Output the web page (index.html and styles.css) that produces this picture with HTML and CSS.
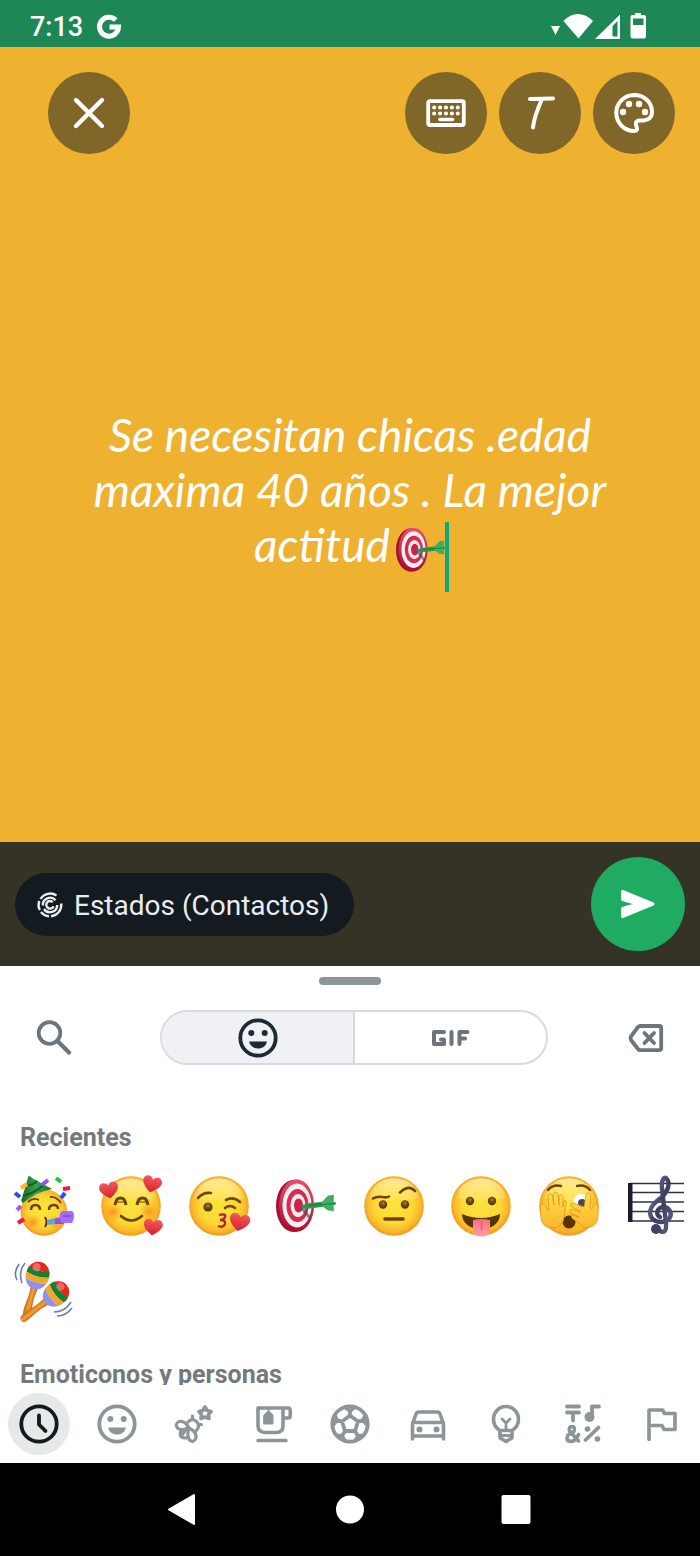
FILE: index.html
```html
<!DOCTYPE html>
<html lang="es">
<head>
<meta charset="utf-8">
<meta name="viewport" content="width=device-width, initial-scale=1">
<title>Estado</title>
<link rel="stylesheet" href="styles.css">
</head>
<body>
<svg class="defs" aria-hidden="true">
  <defs>
    <radialGradient id="face" cx="50%" cy="48%" r="53%">
      <stop offset="0" stop-color="#fbe33c"/><stop offset=".6" stop-color="#fcd935"/><stop offset=".85" stop-color="#fbb829"/><stop offset="1" stop-color="#f08f1b"/>
    </radialGradient>
    <linearGradient id="shine" x1="0" y1="0" x2="0" y2="1">
      <stop offset="0" stop-color="#fff6c4" stop-opacity=".75"/><stop offset="1" stop-color="#fff08a" stop-opacity=".3"/>
    </linearGradient>
    <radialGradient id="blush"><stop offset="0" stop-color="#f9801d" stop-opacity=".8"/><stop offset="1" stop-color="#f9a01d" stop-opacity="0"/></radialGradient>
    <radialGradient id="pupil" cx="50%" cy="35%" r="60%"><stop offset="0" stop-color="#a9814a"/><stop offset=".5" stop-color="#70480f"/><stop offset="1" stop-color="#5a3505"/></radialGradient>
    <linearGradient id="red" x1="0" y1="0" x2="0" y2="1"><stop offset="0" stop-color="#f4595c"/><stop offset="1" stop-color="#d5202d"/></linearGradient>
    <linearGradient id="hand" x1="0" y1="0" x2="0" y2="1"><stop offset="0" stop-color="#ffe04b"/><stop offset="1" stop-color="#fbb62c"/></linearGradient>
    <linearGradient id="tongue" x1="0" y1="0" x2="0" y2="1"><stop offset="0" stop-color="#f4707c"/><stop offset="1" stop-color="#ff9da3"/></linearGradient>
    <linearGradient id="hat" x1="0" y1="0" x2="1" y2="0"><stop offset="0" stop-color="#1c6b2c"/><stop offset=".5" stop-color="#35a34a"/><stop offset="1" stop-color="#1a6a2b"/></linearGradient>
    <linearGradient id="rim" x1="0" y1="0" x2="0" y2="1"><stop offset="0" stop-color="#e8506a"/><stop offset="1" stop-color="#a80d2c"/></linearGradient>
    <linearGradient id="clef" x1="0" y1="0" x2="1" y2="1"><stop offset="0" stop-color="#8184a5"/><stop offset=".5" stop-color="#3c3e60"/><stop offset="1" stop-color="#5b5d82"/></linearGradient>
    <linearGradient id="wood" x1="0" y1="0" x2="1" y2="0"><stop offset="0" stop-color="#c96a10"/><stop offset=".5" stop-color="#f2a23c"/><stop offset="1" stop-color="#b85c0c"/></linearGradient>
    <clipPath id="bead"><ellipse cx="0" cy="0" rx="11.8" ry="14"/></clipPath>
    <g id="head"><circle cx="30" cy="30" r="29.8" fill="url(#face)"/><path d="M5 22C8 9 18 2.5 30 2.5S52 9 55 22C42 25 18 25 5 22Z" fill="url(#shine)"/></g>
    <path id="heart" d="M0 8.500C-5 5-10 1-9.500-3.500-8.500-8.500-2.500-9 0-4.500 2.500-9 8.500-8.500 9.500-3.500 10 1 5 5 0 8.500Z" fill="url(#red)"/>
    <g id="maraca">
      <path d="M-4 12C-2 24-6 34-4 41-3 45 3 45 3 41 4 34 1 24 4 12Z" fill="url(#wood)"/>
      <g clip-path="url(#bead)"><path d="M-12-14H12V-5H-12Z" fill="#e5271c"/><path d="M-12-7Q0-3 12-7V-1Q0 3-12-1Z" fill="#14832f"/><path d="M-12-1Q0 3 12-1V5Q0 9-12 5Z" fill="#f4a629"/><path d="M-12 5Q0 9 12 5V15H-12Z" fill="#8f92e8"/><ellipse cx="-3" cy="-8" rx="4" ry="4" fill="#fff" opacity=".3"/></g>
    </g>
    <g id="dartboard">
      <ellipse cx="17.500" cy="30" rx="17.500" ry="26" fill="#a70f30"/>
      <ellipse cx="20.500" cy="29.500" rx="17.500" ry="26.300" fill="url(#rim)"/>
      <ellipse cx="21" cy="29.500" rx="14.500" ry="22" fill="#f5eff3"/>
      <ellipse cx="21.500" cy="29.500" rx="11" ry="16.500" fill="#d72c4d"/>
      <ellipse cx="22" cy="29.500" rx="7.500" ry="11.500" fill="#f3e9ef"/>
      <ellipse cx="22.500" cy="29.500" rx="4.500" ry="7" fill="#cf2145"/>
      <path d="M25 31 34 42" stroke="#51485b" stroke-width="3" opacity=".65"/>
      <path d="M24 31 30 27.500 49 25.500V30.500L30 33Z" fill="#279a4b"/>
      <path d="M46 26 52 19.500 58 19 57.500 25.500 60 26.500V28.500L57.500 29 58 35 52 34.500 46 30Z" fill="#3fae62"/>
      <path d="M32 29.500 59 27.500" stroke="#1d7a3d" stroke-width="1"/>
    </g>
    <g id="smiley"><circle cx="20" cy="20" r="17.700" fill="none" stroke="currentColor" stroke-width="3.800"/><circle cx="13.300" cy="15" r="3" fill="currentColor"/><circle cx="26.700" cy="15" r="3" fill="currentColor"/><path d="M11 23.500H29C28 28 24.500 30.500 20 30.500S12 28 11 23.500Z" fill="currentColor"/></g>
  </defs>
</svg>

<header class="status">
  <time class="status-time">7:13</time>
  <svg class="status-g" viewBox="0 0 24 24" aria-hidden="true"><path d="M18.800 5A9.500 9.500 0 1 0 21.500 12H12.500" fill="none" stroke="#fff" stroke-width="5"/></svg>
  <svg class="status-icons" viewBox="0 0 96 28" aria-hidden="true" fill="#fff">
    <path d="M1 13H10L5.500 22Z"/>
    <path d="M13.500 8Q20 1 28 1T43 8L28.500 25.500Z"/>
    <path fill-rule="evenodd" d="M45 26 70 1.500V26ZM62.500 13V23.500H67.500V8Z"/>
    <path fill-rule="evenodd" d="M85 0H91V2H94Q96 2 96 4V23.500Q96 25.500 94 25.500H82.500Q80.500 25.500 80.500 23.500V4Q80.500 2 82.500 2H85ZM83 5.500V12H93.500V5.500Z"/>
  </svg>
</header>

<main class="stage">
  <div class="tools">
    <button class="round close" aria-label="Cerrar"><svg viewBox="0 0 32 32"><path d="M3 3 29 29M29 3 3 29" stroke="#fff" stroke-width="4.400" stroke-linecap="round"/></svg></button>
    <button class="round" aria-label="Teclado"><svg class="wide" viewBox="0 0 40 28"><rect x="2.200" y="2.200" width="35.600" height="23.800" rx="1.500" fill="none" stroke="#fff" stroke-width="3.800"/><path d="M8.200 8.500H33M8.200 14.500H33" stroke="#fff" stroke-width="4.200" stroke-linecap="round" stroke-dasharray="0 5.900"/><path d="M14 20.500H26.500" stroke="#fff" stroke-width="3.600" stroke-linecap="round"/></svg></button>
    <button class="round" aria-label="Fuente"><svg viewBox="0 0 32 32"><path d="M6 2 29 1.500M18 2C14 11 10 20 9 30.500" fill="none" stroke="#fff" stroke-width="4" stroke-linecap="round" stroke-linejoin="round"/></svg></button>
    <button class="round" aria-label="Color de fondo"><svg class="palette" viewBox="0 0 24 24" fill="#fff"><path d="M12 3A9 9 0 1 0 12.300 21Q14 20.800 13.300 19Q12 15.800 15 15.700H17Q21 15.200 21 11.500C21 6.500 17 3 12 3Z" fill="none" stroke="#fff" stroke-width="2"/><circle cx="6.500" cy="11.500" r="1.600"/><circle cx="9.500" cy="7.500" r="1.600"/><circle cx="14.500" cy="7.500" r="1.600"/><circle cx="17.500" cy="11.500" r="1.600"/></svg></button>
  </div>
  <div class="editor">
    <p class="note" role="textbox" aria-label="Estado" contenteditable="true">Se necesitan chicas .edad maxima 40 años . La mejor <span class="last">actitud<svg class="inline-emoji" viewBox="0 0 60 60" role="img" aria-label="Diana"><use href="#dartboard"/></svg><i class="caret"></i></span></p>
  </div>
</main>

<section class="composer">
  <button class="audience">
    <svg viewBox="0 0 26 26" fill="none" stroke="currentColor" stroke-width="2.400" aria-hidden="true"><path d="M3.500 7A11.300 11.300 0 0 1 19.500 3.500M24.200 11.500A11.300 11.300 0 0 1 14 24.200M12 24.200A11.300 11.300 0 0 1 4 20M2.800 18A11.300 11.300 0 0 1 2.300 9"/><path d="M18.500 8.200A7.200 7.200 0 0 0 5.900 13.500M7 17A7.200 7.200 0 0 0 20.200 13"/><path d="M15.800 10.200A3.800 3.800 0 1 0 16.600 14.200"/></svg>
    Estados (Contactos)
  </button>
  <button class="send" aria-label="Enviar"><svg viewBox="0 0 36 30"><path d="M2.500 2.500 33 15 2.500 27.500V19.500L18 15 2.500 10.500Z" fill="#fff" stroke="#fff" stroke-width="3" stroke-linejoin="round"/></svg></button>
</section>

<section class="panel">
  <div class="handle"></div>
  <div class="toolbar">
    <button class="plain" aria-label="Buscar"><svg viewBox="0 0 36 36" fill="none" stroke="currentColor"><circle cx="13.500" cy="13" r="10.800" stroke-width="3.800"/><path d="M21.500 21 33 32.500" stroke-width="4.200" stroke-linecap="round"/></svg></button>
    <div class="tabs">
      <button class="tab active" aria-label="Emojis"><svg class="icon40" viewBox="0 0 40 40"><use href="#smiley"/></svg></button>
      <button class="tab" aria-label="GIF"><svg class="gif" viewBox="0 0 38 16" fill="none" stroke="currentColor" stroke-width="4" stroke-linecap="round" stroke-linejoin="round"><path d="M12 2H2V14H12V9.500H9M19.500 2V14M27.500 14V2H35.500M27.500 8.500H33"/></svg></button>
    </div>
    <button class="plain" aria-label="Borrar"><svg viewBox="0 0 36 36" fill="none" stroke="currentColor" stroke-width="3.800" stroke-linecap="round" stroke-linejoin="round"><path d="M12 6H31Q33.200 6 33.200 8V28Q33.200 30.200 31 30.200H12Q11 30.200 10 29L3 20Q2 18 3 16.300L10 7Q11 6 12 6ZM16.500 13 26 23M26 13 16.500 23"/></svg></button>
  </div>
  <div class="list">
    <h2>Recientes</h2>
    <div class="grid">
      <button aria-label="Cara de fiesta"><svg viewBox="0 0 60 60">
        <circle cx="30" cy="36.500" r="23.300" fill="url(#face)"/><ellipse cx="19" cy="46" rx="9" ry="8" fill="url(#blush)"/><ellipse cx="42" cy="46" rx="9" ry="7" fill="url(#blush)"/>
        <path d="M14.500 0Q17 0 18 2L38 13Q22 16 9 27Q6 25 8 22Z" fill="url(#hat)"/><path d="M12 9Q18 10 23 5M9 20Q20 17 30 9" fill="none" stroke="#165a24" stroke-width="2"/>
        <path d="M14 26Q19 21 25 24M36 21Q42 20 47 27" fill="none" stroke="#6e430a" stroke-width="1.800"/><path d="M17 34Q17 29 21.500 29T26 34M35 34Q35 29 39.500 29T44 33" fill="none" stroke="#6e430a" stroke-width="2.400"/>
        <path d="M31 41Q34 46 31 51" fill="none" stroke="#5a3505" stroke-width="2"/><path d="M33 44 48 41V47L33 49Z" fill="#59a7dd"/><path d="M41 42.500 50 41V48L41 48Z" fill="#8b54e6"/><path d="M46 37Q47 35 50 35H58Q60 36 60 40T58 47H48Q45 44 46 37Z" fill="#a56bfb"/><path d="M49 40H57" fill="none" stroke="#7f48dd" stroke-width="1.600"/>
        <path d="M28 9 34 4" stroke="#9550f2" stroke-width="4"/><path d="M42 2 47 6" stroke="#2ac33c" stroke-width="4"/><path d="M49 13 56 12" stroke="#ef1747" stroke-width="4"/><path d="M47 22 51 17" stroke="#2052ed" stroke-width="4"/><path d="M7 12 13 8" stroke="#f9b729" stroke-width="4"/><path d="M1 17 6 21" stroke="#2052ed" stroke-width="4"/><path d="M3 34 7 30" stroke="#9c61ee" stroke-width="4"/><path d="M4 47 10 43" stroke="#ef1747" stroke-width="4"/></svg></button>
      <button aria-label="Cara con corazones"><svg viewBox="0 0 60 60"><use href="#head"/><circle cx="12" cy="36" r="10" fill="url(#blush)"/><circle cx="48" cy="36" r="10" fill="url(#blush)"/><path d="M14 29Q15 22 19.500 22T25 29M36 29Q37 22 41.500 22T47 29" fill="none" stroke="#6c440b" stroke-width="3"/><path d="M16 26H23M38 26H45" stroke="#6c440b" stroke-width="1.200"/><path d="M20 40Q30 49 41 40" fill="none" stroke="#6c440b" stroke-width="2.600" stroke-linecap="round"/><use href="#heart" transform="translate(8 14) rotate(-10)"/><use href="#heart" transform="translate(51 8) rotate(14)"/><use href="#heart" transform="translate(52 51) rotate(8)"/></svg></button>
      <button aria-label="Cara lanzando un beso"><svg viewBox="0 0 60 60"><use href="#head"/><g fill="none" stroke="#71450c" stroke-width="2.600" stroke-linecap="round"><path d="M9 22Q14 16 22 17M37 24Q44 20 51 26M36 32Q41 28 46 32"/></g><circle cx="19" cy="31" r="4.600" fill="url(#pupil)"/><path d="M30 39Q37 37 36 41 35 44 31 44 37 44 36 48 34 52 29 50" fill="none" stroke="#b52143" stroke-width="2.400"/><use href="#heart" transform="translate(50.500 46) rotate(12) scale(1.080)"/></svg></button>
      <button aria-label="Diana"><svg viewBox="0 0 60 60"><use href="#dartboard"/></svg></button>
      <button aria-label="Cara con ceja alzada"><svg viewBox="0 0 60 60"><use href="#head"/><circle cx="19" cy="28.500" r="4.200" fill="url(#pupil)"/><circle cx="41" cy="28.500" r="4.200" fill="url(#pupil)"/><path d="M21 43H39" stroke="#70430b" stroke-width="3.600" stroke-linecap="round"/><path d="M9 22.500Q13 20 18 21T25 20.500M36 16.500Q45 8 51 15" fill="none" stroke="#70430b" stroke-width="2.600" stroke-linecap="round"/></svg></button>
      <button aria-label="Cara sacando la lengua"><svg viewBox="0 0 60 60"><use href="#head"/><circle cx="19" cy="25" r="4.200" fill="url(#pupil)"/><circle cx="41" cy="25" r="4.200" fill="url(#pupil)"/><path d="M11 38Q30 46 49 38C49 47 41 53 30 53S11 47 11 38Z" fill="#573606"/><path d="M22 44Q30 42 39 44V53C39 63 22 63 22 53Z" fill="url(#tongue)"/><path d="M30.500 45V54" stroke="#de5d70" stroke-width="1.500"/></svg></button>
      <button aria-label="Cara mirando entre los dedos"><svg viewBox="0 0 60 60"><use href="#head"/><circle cx="30" cy="46" r="14" fill="url(#blush)"/><path d="M9 14Q14 8 22 10M38 10Q46 8 51 14" fill="none" stroke="#70430b" stroke-width="2.400" stroke-linecap="round"/><ellipse cx="42" cy="25" rx="7.500" ry="7" fill="#fff"/><circle cx="43" cy="27" r="4" fill="#4c4a50"/><circle cx="30" cy="46" r="6.500" fill="#573306"/>
        <g stroke="#e08a1a" stroke-width=".7" fill="url(#hand)"><path d="M1 29Q5 26 8 33L10 35 9 20Q10 16 13 19L15 29 14 18Q17 14 19 18L20 29 20 20Q23 17 24 21L24 31 25 25Q28 23 27 28L25 41Q24 52 12 52 3 51 2 42Z"/><path d="M59 29Q55 26 53 33L51 31 52 19Q49 15 47 19L45 31 34 27Q30 28 33 31L42 36 32 33Q29 34 32 37L40 41 33 39Q31 41 34 43L41 48Q45 54 54 50 59 47 59 39Z"/></g></svg></button>
      <button aria-label="Partitura"><svg viewBox="0 0 60 60"><path d="M4 7.500H58M4 16.500H58M4 26H58M4 35.500H58M4 45H58" stroke="#303047" stroke-width="1.600"/><path d="M2 7H6.500V46H2Z" fill="#1c1b35"/><path d="M31 53Q41 61 40 47L36 13C35 4 38 1 40 2 45 7 42 15 36 21 28 27 24 31 24 37 25 46 35 48 42 44 48 38 43 30 36 31 30 33 30 39 34 41" fill="none" stroke="url(#clef)" stroke-linecap="round" stroke-width="4.400"/><circle cx="30" cy="53" r="5" fill="#404261"/></svg></button>
      <button aria-label="Maracas"><svg viewBox="0 0 60 60"><use href="#maraca" transform="translate(23.500 13.500) rotate(15)"/><use href="#maraca" transform="translate(42 32) rotate(52)"/><path d="M5 2Q-1 11 3 18M11 1Q4 9 8 21M40 50Q51 50 57 40M43 54Q52 54 58 46" fill="none" stroke="#6280b9" stroke-width="1.600"/></svg></button>
    </div>
    <h2 class="next">Emoticonos y personas</h2>
  </div>
  <nav class="categories" aria-label="Categorías">
    <button class="current" aria-label="Recientes"><svg viewBox="0 0 40 40" fill="none" stroke="currentColor" stroke-width="3.800"><circle cx="20" cy="20" r="17.700"/><path d="M20 11.500V20.500L26.500 27" stroke-linecap="round" stroke-linejoin="round"/></svg></button>
    <button aria-label="Emoticonos"><svg viewBox="0 0 40 40"><use href="#smiley"/></svg></button>
    <button aria-label="Animales y naturaleza"><svg viewBox="0 0 40 40" fill="none" stroke="currentColor" stroke-width="3.600" stroke-linejoin="round" stroke-linecap="round"><path d="M31 3 33 6.500 37 7.500 34.500 10.500 35 14.500 31 13 27 14.500 27.500 10.500 25 7.500 29 6.500Z"/><path d="M14 18Q18 13.500 22.500 17.500T22 27M18.500 15V12M24 20.500H27.500" stroke-width="3.200"/><path d="M15 24Q11 16 5 17.500Q0 20.500 4 24.500Q8 27 15 24ZM15 24Q23 28 22 34Q19.500 39.500 15.500 36Q12.500 32 15 24Z" stroke-width="3.200"/><path d="M7 26.500Q4 34 12 34M13 24 8 31" stroke-width="3.200"/></svg></button>
    <button aria-label="Comida y bebida"><svg viewBox="0 0 40 40" fill="none" stroke="currentColor" stroke-width="3.600" stroke-linecap="round" stroke-linejoin="round"><path d="M6 4H31V22Q31 28.500 24 28.500H14Q6 28.500 6 22ZM31 4H36Q38.200 4 38.200 6V12Q38.200 14 36 14H31M6 36.500H34"/><path d="M16.500 4V8" stroke-width="2"/><path d="M12 11 16.500 7 21 11V20H12Z" fill="currentColor" stroke-width="1"/></svg></button>
    <button aria-label="Actividades"><svg viewBox="0 0 40 40" fill="none" stroke="currentColor" stroke-width="3.800" stroke-linejoin="round"><circle cx="20" cy="20" r="17.700"/><path d="M20 11.500 28 17.500 25 27H15L12 17.500ZM20 11.500V7L15 3M20 7 25 3M28 17.500 33 16 36 10M33 16 37 21M25 27 28 32 34 31M28 32 25 37M15 27 12 32 6 31M12 32 15 37M12 17.500 7 16 4 10M7 16 3 21"/></svg></button>
    <button aria-label="Viajes"><svg viewBox="0 0 40 40" fill="none" stroke="currentColor" stroke-width="3.600" stroke-linecap="round" stroke-linejoin="round"><path d="M4.500 35V20L8 10Q8.500 8 11 8H29Q31.500 8 32 10L35.500 20V35M4.500 18.500H35.500M4.500 32H35.500"/><circle cx="11.500" cy="25.500" r="3" fill="currentColor" stroke="none"/><circle cx="28.500" cy="25.500" r="3" fill="currentColor" stroke="none"/></svg></button>
    <button aria-label="Objetos"><svg viewBox="0 0 40 40" fill="none" stroke="currentColor" stroke-width="3.600" stroke-linecap="round" stroke-linejoin="round"><path d="M14 26.500Q7.500 22.500 7.500 15A12.500 12.500 0 0 1 32.500 15Q32.500 22.500 26 26.500V33.500Q26 34.500 24 35L20 37.500 16 35Q14 34.500 14 33.500ZM14 26.500H26"/><path d="M16 15 20 19 24 15M20 19V26M15 31.500H25" stroke-width="2.800"/></svg></button>
    <button aria-label="Símbolos"><svg viewBox="0 0 40 40" fill="none" stroke="currentColor" stroke-width="3.800" stroke-linecap="round" stroke-linejoin="round"><path d="M4 2.500H16M4 8.500H16M10 8.500V16.500M29 12V2.500H36M22.500 36 35.500 23.500"/><circle cx="26.500" cy="13" r="5" fill="currentColor" stroke="none"/><circle cx="24.500" cy="25" r="2.800" fill="currentColor" stroke="none"/><circle cx="34.500" cy="35" r="2.800" fill="currentColor" stroke="none"/><path d="M15.500 37 6.500 27Q5.500 22.500 9 22.500T11 27.500L5 31Q2 37 8 37.500 13 37 15.500 30.500" stroke-width="3.600"/></svg></button>
    <button aria-label="Banderas"><svg viewBox="0 0 40 40" fill="none" stroke="currentColor" stroke-width="3.600" stroke-linecap="round" stroke-linejoin="round"><path d="M8 35.500V6H21.500L23.500 9.500H34V25.500H23L21 21.500H8"/></svg></button>
  </nav>
</section>

<footer class="system">
  <button aria-label="Atrás"><svg viewBox="0 0 32 32"><path d="M1 15.500 26 1V30Z" fill="#fff" stroke="#fff" stroke-width="2" stroke-linejoin="round"/></svg></button>
  <button aria-label="Inicio"><svg viewBox="0 0 32 32"><circle cx="16" cy="15.500" r="14" fill="#fff"/></svg></button>
  <button aria-label="Aplicaciones"><svg viewBox="0 0 32 32"><rect x="1.500" y="1" width="29" height="29" rx="2" fill="#fff"/></svg></button>
</footer>
</body>
</html>
```
FILE: styles.css
```css
* { box-sizing: border-box; }
body {
  margin: 0;
  min-height: 100vh;
  display: flex;
  flex-direction: column;
  background: #fff;
  font-family: Roboto, "Noto Sans", sans-serif;
}
button {
  display: flex;
  align-items: center;
  justify-content: center;
  padding: 0;
  border: 0;
  background: none;
  color: inherit;
  font: inherit;
}
svg { display: block; overflow: visible; }
.defs { position: absolute; width: 0; height: 0; }

.status {
  display: flex;
  align-items: center;
  height: 47px;
  padding: 6px 54px 0 30px;
  background: #1d8755;
  color: #fff;
}
.status-time { font-size: 27px; font-weight: 500; line-height: 32px; }
.status-g { width: 24px; margin-left: 14px; }
.status-icons { width: 96px; margin-left: auto; }

.stage {
  flex: 1;
  display: flex;
  flex-direction: column;
  background: #eeb230;
}
.tools { display: flex; gap: 12px; padding: 25px 25px 0 48px; }
.close { margin-right: auto; }
.round {
  width: 82px;
  height: 82px;
  border-radius: 50%;
  background: #806628;
}
.round svg { width: 32px; }
.round .wide { width: 40px; }
.round .palette { width: 48px; }
.editor {
  flex: 1;
  display: grid;
  place-items: center;
  padding: 0 72px 14px;
}
.note {
  margin: 0;
  color: #fff;
  font-family: Lato, sans-serif;
  font-size: 46px;
  font-style: italic;
  line-height: 55px;
  text-align: center;
  outline: 0;
}
.last { position: relative; display: inline-block; }
.inline-emoji {
  display: inline-block;
  width: 50px;
  height: 50px;
  margin-left: 6px;
  vertical-align: -13px;
}
.caret {
  position: absolute;
  top: 5px;
  right: -3px;
  width: 4px;
  height: 70px;
  background: #0aa884;
}

.composer {
  display: flex;
  align-items: center;
  justify-content: space-between;
  height: 124px;
  padding: 0 15px;
  background: #353326;
}
.audience {
  gap: 11px;
  height: 63px;
  padding: 2px 25px 0 22px;
  border-radius: 32px;
  background: #131b21;
  color: #e9edef;
  font-size: 28px;
  white-space: nowrap;
}
.audience svg { width: 26px; }
.send {
  width: 94px;
  height: 94px;
  border-radius: 50%;
  background: #1fab61;
}
.send svg { width: 36px; }

.panel { color: #6b757b; }
.handle {
  width: 62px;
  height: 8px;
  margin: 11px auto 25px;
  border-radius: 4px;
  background: #8c9598;
}
.toolbar {
  display: grid;
  grid-template-columns: 160px 1fr 152px;
  align-items: center;
}
.plain { width: 108px; height: 54px; }
.plain:last-child { justify-self: end; }
.plain svg { width: 36px; }
.tabs {
  display: flex;
  height: 55px;
  overflow: hidden;
  border: 2px solid #d8dadc;
  border-radius: 28px;
}
.tab { flex: 1; }
.tab.active {
  border-right: 2px solid #d8dadc;
  background: #f0f1f4;
  color: #1e2a32;
}
.icon40 { width: 40px; }
.gif { width: 38px; }
.list { height: 320px; overflow: hidden; }
h2 {
  margin: 0;
  padding: 0 20px;
  color: #73797d;
  font-size: 25px;
  font-weight: 700;
  line-height: 30px;
}
.list h2:first-child { padding-top: 58px; }
.grid {
  display: grid;
  grid-template-columns: repeat(8, 1fr);
  grid-auto-rows: 86px;
  margin-top: 10px;
}
.grid svg { width: 60px; }
.list .next { margin-top: 25px; }
.categories {
  display: grid;
  grid-template-columns: repeat(9, 1fr);
  justify-items: center;
  align-items: center;
  height: 78px;
  color: #8c9598;
}
.categories button { width: 62px; height: 62px; border-radius: 50%; }
.categories svg { width: 40px; }
.categories .current { background: #e7e9e8; color: #101a20; }

.system {
  display: flex;
  align-items: center;
  justify-content: center;
  gap: 134px;
  height: 93px;
  background: #000;
}
.system svg { width: 32px; }
```
